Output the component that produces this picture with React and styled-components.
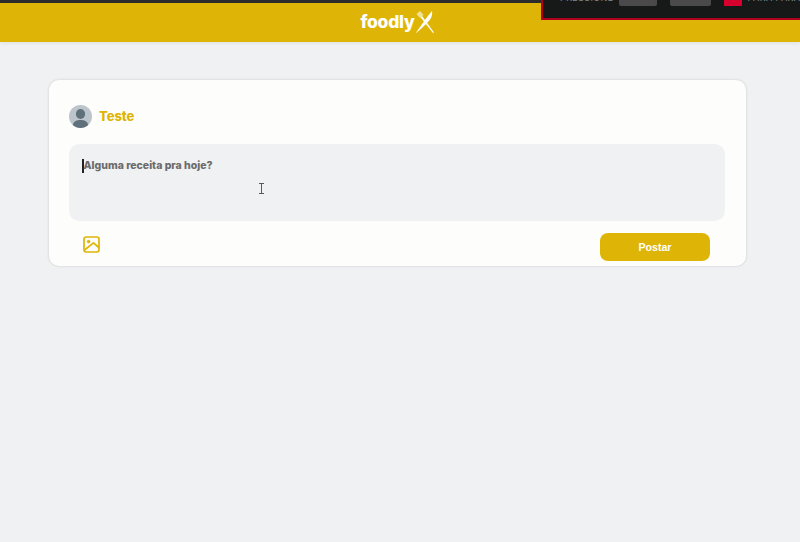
import React from "react";
import styled, { createGlobalStyle } from "styled-components";

const GlobalStyle = createGlobalStyle`
  html, body {
    margin: 0;
    padding: 0;
    background: #f0f1f3;
    font-family: "Inter", "Liberation Sans", sans-serif;
  }
`;

function Logo() {
  return (
    <LogoBox>
      foodly
      <svg width="20" height="24" viewBox="0 0 20 24" fill="none">
        <path d="M0.5 23.5 C5 17 11 8 17 1 C17.8 5 16 9.5 12.5 12.5 C9 16 5 20 0.5 23.5 Z" fill="#fff" />
        <path d="M6 4.5 L19 22.5 L18 23 L4.5 6 Z" fill="#fff" />
        <path d="M1.5 4 L5 1 L8.5 5 L5 8 Z" fill="#f1e29a" />
      </svg>
    </LogoBox>
  );
}

function Avatar() {
  return (
    <svg width="23" height="23" viewBox="0 0 23 23">
      <circle cx="11.5" cy="11.5" r="11.5" fill="#bcc5cb" />
      <ellipse cx="11.5" cy="9" rx="4.6" ry="5" fill="#5f707a" />
      <path d="M3.8 20 C4.5 16 8 15 11.5 15 C15 15 18.5 16 19.2 20 C17 22 14 23 11.5 23 C9 23 6 22 3.8 20 Z" fill="#5f707a" />
    </svg>
  );
}

function ImageIcon() {
  return (
    <svg width="17" height="17" viewBox="0 0 17 17" fill="none" stroke="#deb506" strokeWidth="1.7">
      <rect x="1" y="1" width="15" height="15" rx="2.2" />
      <circle cx="5.6" cy="5.6" r="1.5" fill="#deb506" strokeWidth="0.5" />
      <path d="M1.5 14 L10.5 6.8 L15.8 11.5" strokeLinejoin="round" />
    </svg>
  );
}

function TextCursor() {
  return (
    <CursorBox width="7" height="11" viewBox="0 0 7 11" fill="none" stroke="#4a4a4a" strokeWidth="0.9">
      <path d="M1 0.5 H6 M3.5 0.5 V10.5 M1 10.5 H6" />
    </CursorBox>
  );
}

export default function App() {
  return (
    <>
      <GlobalStyle />
      <Page>
        <Header>
          <Logo />
        </Header>
        <Recorder>
          <RecLabel>PRESSIONE</RecLabel>
          <KeyCap $width={38} />
          <KeyCap $width={41} />
          <RedBox />
          <RecLabel>PARA PARAR</RecLabel>
        </Recorder>
        <Main>
          <PostCard>
            <UserRow>
              <Avatar />
              <UserName>Teste</UserName>
            </UserRow>
            <InputBox>
              <Caret />
              <Placeholder>Alguma receita pra hoje?</Placeholder>
              <TextCursor />
            </InputBox>
            <Actions>
              <ImageButton>
                <ImageIcon />
              </ImageButton>
              <PostButton>Postar</PostButton>
            </Actions>
          </PostCard>
        </Main>
      </Page>
    </>
  );
}

const Page = styled.div`
  position: relative;
  width: 800px;
  height: 542px;
  overflow: hidden;
`;

const Header = styled.header`
  height: 39px;
  background: #deb506;
  border-top: 3px solid #2c2c2c;
  box-shadow: 0 1px 4px rgba(0, 0, 0, 0.08);
  display: flex;
  align-items: center;
  justify-content: center;
`;

const LogoBox = styled.div`
  display: flex;
  align-items: center;
  color: #fff;
  font-size: 17.5px;
  font-weight: 800;
  letter-spacing: -0.25px;
  margin: -2px 0 0 -5px;
`;

const Recorder = styled.div`
  position: absolute;
  top: 0;
  right: 0;
  width: 259px;
  height: 20px;
  box-sizing: border-box;
  background: #171918;
  border-left: 2px solid #b00020;
  border-bottom: 2px solid #b00020;
  display: flex;
  align-items: flex-end;
  padding: 0 0 12px 17px;
  overflow: hidden;
`;

const RecLabel = styled.span`
  font-size: 9px;
  line-height: 9px;
  color: #8a8a8a;
  letter-spacing: 0.4px;
  white-space: nowrap;
  margin: 0 5px 4px 0;
`;

const KeyCap = styled.span`
  flex: none;
  width: ${(p) => p.$width}px;
  height: 14px;
  margin-right: 13px;
  border-radius: 2px;
  background: #4a4a4a;
`;

const RedBox = styled.span`
  flex: none;
  width: 18px;
  height: 14px;
  margin-right: 6px;
  background: #d6002f;
`;

const Main = styled.main`
  padding: 38px 54px 0 49px;
`;

const PostCard = styled.section`
  height: 186px;
  box-sizing: border-box;
  padding: 25px 21px 0 20px;
  background: #fdfefc;
  border-radius: 10px;
  box-shadow: 0 0 3px rgba(0, 0, 0, 0.16);
`;

const UserRow = styled.div`
  display: flex;
  align-items: center;
  gap: 7px;
  height: 23px;
`;

const UserName = styled.span`
  color: #deb506;
  font-size: 13px;
  font-weight: 800;
  letter-spacing: -0.1px;
  margin-top: -1px;
`;

const InputBox = styled.div`
  position: relative;
  height: 77px;
  margin-top: 16px;
  padding: 15px 13px;
  box-sizing: border-box;
  background: #f0f1f3;
  border-radius: 10px;
  display: flex;
  align-items: flex-start;
`;

const Caret = styled.span`
  width: 1.5px;
  height: 14px;
  background: #222;
`;

const Placeholder = styled.span`
  color: #6b6b6b;
  font-size: 10.5px;
  font-weight: 800;
  line-height: 14px;
`;

const CursorBox = styled.svg`
  position: absolute;
  left: 189px;
  top: 39px;
`;

const Actions = styled.div`
  display: flex;
  align-items: center;
  justify-content: space-between;
  margin-top: 12px;
  padding: 0 15px 0 14px;
`;

const ImageButton = styled.button`
  display: flex;
  padding: 0;
  border: none;
  background: none;
  margin-bottom: 6px;
`;

const PostButton = styled.button`
  width: 110px;
  height: 28px;
  border: none;
  border-radius: 8px;
  background: #deb506;
  color: #fff;
  font-family: "Liberation Sans", sans-serif;
  font-size: 10.6px;
  font-weight: 700;
  padding-bottom: 2px;
`;
